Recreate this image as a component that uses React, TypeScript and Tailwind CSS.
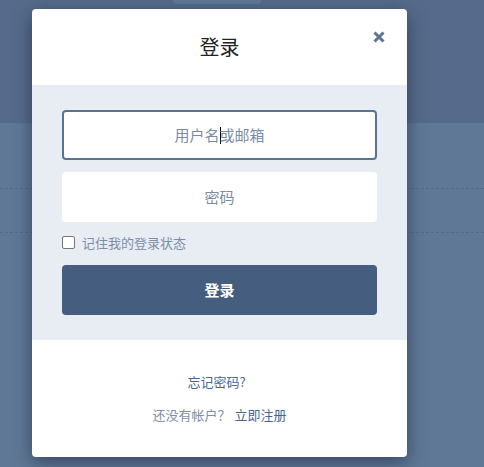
import React from "react";

const font = { fontFamily: '"Noto Sans CJK SC", "Noto Sans", sans-serif' };

const LoginModal: React.FC = () => {
  return (
    <div className="absolute left-[32px] top-[9px] w-[375px] overflow-hidden rounded-[4px] bg-white shadow-[0_5px_18px_rgba(20,30,50,0.55)]">
      {/* Header */}
      <div className="relative flex h-[76px] items-center justify-center">
        <h2 className="text-[20px] font-normal leading-none text-[#222]">登录</h2>
        <button className="absolute right-[22px] top-[22px] p-0" aria-label="close">
          <svg width="12" height="12" viewBox="0 0 12 12">
            <path d="M1.5 1.5 L10.5 10.5 M10.5 1.5 L1.5 10.5" stroke="#5f7493" strokeWidth="3" strokeLinecap="butt" />
          </svg>
        </button>
      </div>

      {/* Form */}
      <div className="flex flex-col bg-[#e8ecf3] px-[30px] pt-[25px] pb-[25px]">
        <div className="flex h-[50px] items-center justify-center rounded-[4px] border-2 border-[#5a7393] bg-white text-[15px] text-[#7b8ca6]">
          <span>用户名</span>
          <span className="-mr-px inline-block h-[17px] w-px bg-black" />
          <span>或邮箱</span>
        </div>
        <div className="mt-[12px] flex h-[50px] items-center justify-center rounded-[4px] bg-white text-[15px] text-[#7b8ca6]">
          密码
        </div>
        <label className="mt-[14px] flex items-center gap-[7px] text-[13px] leading-none text-[#7d8ea8]">
          <span className="inline-block h-[13px] w-[13px] rounded-[2px] border border-[#767676] bg-white" />
          记住我的登录状态
        </label>
        <button className="mt-[16px] flex h-[50px] items-center justify-center rounded-[4px] bg-[#455d7e] text-[15px] font-bold text-white">
          登录
        </button>
      </div>

      {/* Footer */}
      <div className="flex h-[117px] flex-col items-center pt-[35px] text-[13px] leading-none">
        <a className="-ml-[6px] text-[#4a6690]">忘记密码?</a>
        <div className="mt-[20px] flex items-center">
          <span className="text-[#7d8ea8]">还没有帐户？</span>
          <a className="ml-[4px] text-[#4a6690]">立即注册</a>
        </div>
      </div>
    </div>
  );
};

export default function App() {
  return (
    <div className="relative h-[467px] w-full overflow-hidden bg-[#5f7896]" style={font}>
      {/* Page behind the overlay */}
      <div className="h-[123px] bg-[#566b8b]">
        <div className="ml-[173px] h-[4px] w-[88px] rounded-b-[3px] bg-[#5f7896]" />
      </div>
      <div className="mt-[65px] border-t border-dashed border-[#516a8b]" />
      <div className="mt-[43px] border-t border-dashed border-[#516a8b]" />

      <LoginModal />
    </div>
  );
}
